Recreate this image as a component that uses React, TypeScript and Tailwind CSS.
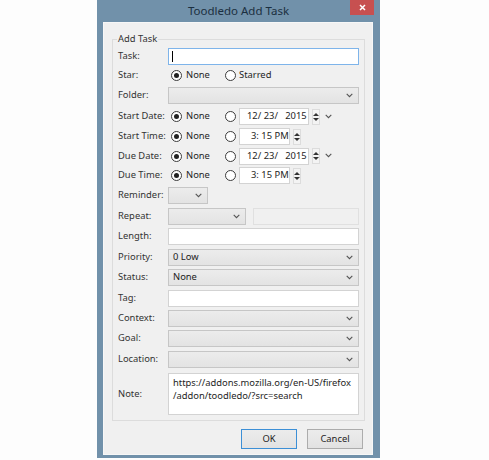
import React from "react";

const Chevron = () => (
  <svg width="7" height="5" viewBox="0 0 7 5" className="shrink-0">
    <path d="M0.7 0.9 L3.5 3.7 L6.3 0.9" fill="none" stroke="#555" strokeWidth="1.1" />
  </svg>
);

const Radio = ({ on }: { on?: boolean }) => (
  <span className="flex h-[11px] w-[11px] shrink-0 items-center justify-center rounded-full border border-[#3c3c3c] bg-white">
    {on ? <span className="h-[5px] w-[5px] rounded-full bg-[#222]" /> : null}
  </span>
);

const Select = ({ w, text }: { w: string; text?: string }) => (
  <div className={`${w} flex h-[17px] items-center justify-between border border-[#c6c6c6] bg-gradient-to-b from-[#ececec] to-[#e3e3e3] pl-[4px] pr-[5px]`}>
    <span className="text-[#222]">{text ?? ""}</span>
    <Chevron />
  </div>
);

const Input = ({ w, focused }: { w: string; focused?: boolean }) => (
  <div className={`${w} flex h-[17px] items-center border ${focused ? "border-[#7eb4ea]" : "border-[#d3d3d3]"} bg-white pl-[3px]`}>
    {focused ? <span className="h-[11px] w-px bg-black" /> : null}
  </div>
);

const Spinner = () => (
  <div className="ml-[3px] flex h-[16px] w-[8px] flex-col items-center justify-center gap-[2px] border border-[#dcdcdc] bg-[#f3f3f3]">
    <svg width="6" height="3" viewBox="0 0 6 3"><path d="M0 3 L3 0 L6 3 Z" fill="#333" /></svg>
    <svg width="6" height="3" viewBox="0 0 6 3"><path d="M0 0 L3 3 L6 0 Z" fill="#333" /></svg>
  </div>
);

const NoneOther = ({ kind }: { kind: "date" | "time" }) => (
  <div className="flex items-center">
    <span className="ml-[3px]"><Radio on /></span>
    <span className="ml-[4px] w-[39px]">None</span>
    <Radio />
    <div className={`ml-[3px] flex h-[17px] items-center border border-[#d3d3d3] bg-white ${kind === "date" ? "w-[70px] pl-[7px]" : "w-[51px] pl-[11px]"}`}>
      {kind === "date" ? (
        <span className="whitespace-pre">12/ 23/   2015</span>
      ) : (
        <span className="whitespace-pre">3: 15 PM</span>
      )}
    </div>
    <Spinner />
    {kind === "date" ? (
      <span className="ml-[5px] mt-[-1px]"><Chevron /></span>
    ) : null}
  </div>
);

const Row = ({ h, label, children }: { h: string; label: string; children?: React.ReactNode }) => (
  <div className={`${h} flex items-center`}>
    <div className="w-[50px] shrink-0 whitespace-nowrap text-[#333]">{label}</div>
    <div className="flex flex-1 items-center">{children}</div>
  </div>
);

export default function App() {
  return (
    <div
      className="h-[460px] w-[489px] whitespace-nowrap bg-[#fdfdfd] text-[9.4px] text-[#1e1e1e]"
      style={{ fontFamily: '"Noto Sans", sans-serif' }}
    >
      <div className="ml-[97px] flex h-[458px] w-[283px] flex-col bg-[#7191aa]">
        <div className="relative flex h-[22px] items-center justify-center">
          <span className="text-[11.5px] text-[#1b2f40]">Toodledo Add Task</span>
          <div className="absolute right-[6px] top-0 flex h-[15px] w-[24px] items-center justify-center bg-[#c75050]">
            <svg width="7" height="7" viewBox="0 0 7 7">
              <path d="M1 1 L6 6 M6 1 L1 6" stroke="white" strokeWidth="1.5" />
            </svg>
          </div>
        </div>
        <div className="ml-[6px] mr-[7px] flex h-[433px] flex-col border border-[#f7f7f7] bg-[#f0f0f0]">
          <div className="relative ml-[8px] mr-[7px] mt-[16px] h-[382px] border border-[#dcdcdc]">
            <span className="absolute left-[4px] top-[-8px] bg-[#f0f0f0] px-[1px] leading-[14px] text-[#333]">Add Task</span>
            <div className="ml-[5px] mr-[5px] mt-[6px] flex flex-col">
              <Row h="h-[20px]" label="Task:"><Input w="w-[191px]" focused /></Row>
              <Row h="h-[19px]" label="Star:">
                <span className="ml-[3px]"><Radio on /></span>
                <span className="ml-[4px] w-[39px]">None</span>
                <Radio />
                <span className="ml-[3px]">Starred</span>
              </Row>
              <Row h="h-[21px]" label="Folder:"><Select w="w-[191px]" /></Row>
              <Row h="h-[21px]" label="Start Date:"><NoneOther kind="date" /></Row>
              <Row h="h-[19px]" label="Start Time:"><NoneOther kind="time" /></Row>
              <Row h="h-[20px]" label="Due Date:"><NoneOther kind="date" /></Row>
              <Row h="h-[19px]" label="Due Time:"><NoneOther kind="time" /></Row>
              <Row h="h-[21px]" label="Reminder:"><Select w="w-[40px]" /></Row>
              <Row h="h-[20px]" label="Repeat:">
                <Select w="w-[78px]" />
                <div className="ml-[7px] h-[17px] w-[106px] border border-[#e0e0e0] bg-[#f0f0f0]" />
              </Row>
              <Row h="h-[21px]" label="Length:"><Input w="w-[191px]" /></Row>
              <Row h="h-[20px]" label="Priority:"><Select w="w-[191px]" text="0 Low" /></Row>
              <Row h="h-[21px]" label="Status:"><Select w="w-[191px]" text="None" /></Row>
              <Row h="h-[20px]" label="Tag:"><Input w="w-[191px]" /></Row>
              <Row h="h-[20px]" label="Context:"><Select w="w-[191px]" /></Row>
              <Row h="h-[21px]" label="Goal:"><Select w="w-[191px]" /></Row>
              <Row h="h-[20px]" label="Location:"><Select w="w-[191px]" /></Row>
              <div className="mt-[4px] flex h-[42px] items-center">
                <div className="w-[50px] shrink-0 text-[#333]">Note:</div>
                <div className="h-[42px] w-[191px] border border-[#d3d3d3] bg-white pl-[4px] pt-[2px] leading-[13px] text-[#1e1e1e]">
                  https://addons.mozilla.org/en-US/firefox
                  <br />
                  /addon/toodledo/?src=search
                </div>
              </div>
            </div>
          </div>
          <div className="mr-[9px] mt-[8px] flex justify-end gap-[10px]">
            <div className="flex h-[20px] w-[56px] items-center justify-center border border-[#3c8fd6] bg-gradient-to-b from-[#ececec] to-[#e2e2e2]">OK</div>
            <div className="flex h-[20px] w-[56px] items-center justify-center border border-[#acacac] bg-gradient-to-b from-[#ececec] to-[#e2e2e2]">Cancel</div>
          </div>
        </div>
      </div>
    </div>
  );
}
